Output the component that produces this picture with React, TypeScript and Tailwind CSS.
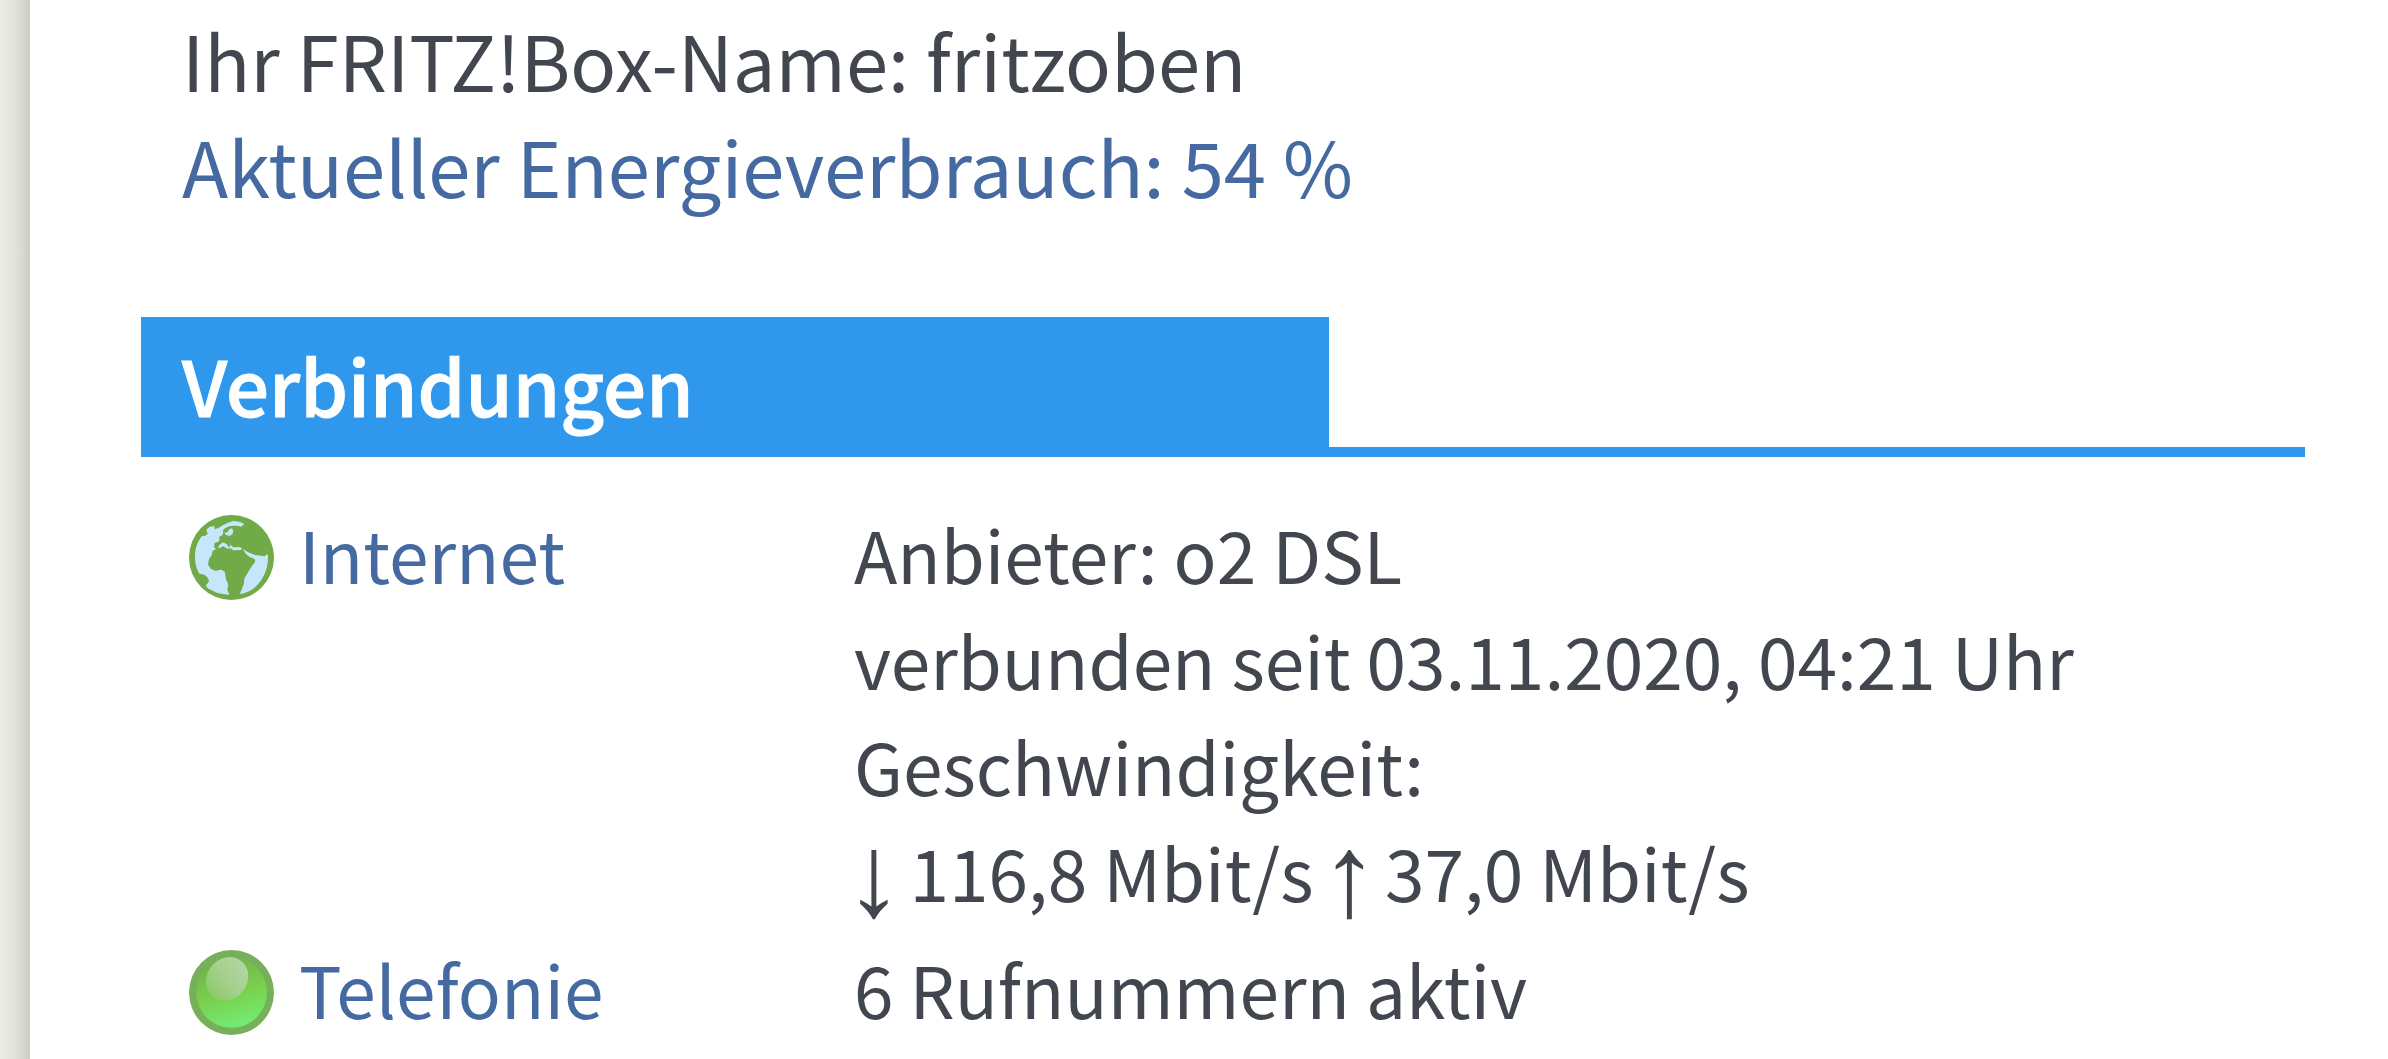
import type { ReactNode } from 'react';

function GlobeIcon() {
  return (
    <svg viewBox="57 60 255 255" className="mr-[25px] mt-[15px] size-[85px] shrink-0" aria-hidden="true">
      <circle cx="184.5" cy="187.5" r="127.5" fill="#70ab47" />
      <g fill="#c5e6fb">
        <path d="M223 86 208 80 190 78 174 83 158 91 146 98 135 103 132 93 118 96 109 104 113 117 104 123 95 124C81 142 75 162 75 188C75 206 80 222 88 236L103 239 112 247 117 257 113 265 108 270 110 277C128 291 152 299 178 299L172 284 175 269 168 252 164 230 154 224 136 227 124 223 114 209 117 193 125 180 128 167 138 162 132 157 134 143 145 141 149 133 147 126 157 121 160 113 159 106 166 99 178 94 190 92 202 92 214 95Z" />
        <path d="M178 103 186 100 190 108 187 118 178 123 167 119 163 113 172 112Z" />
        <path d="M143 160 149 149 159 142 170 147 177 158 181 149 190 157 207 156 216 160 213 165 190 166 181 160 172 161 160 154 150 158Z" />
        <path d="M218 162 235 172 255 180 284 184 291 177 294 182C295 218 282 253 256 276C243 288 227 296 209 297L215 284 222 265 223 251 238 225 256 199 253 191 240 187 228 177Z" />
      </g>
    </svg>
  );
}

function StatusLight() {
  return (
    <svg viewBox="57 60 255 255" className="mr-[25px] mt-[15px] size-[85px] shrink-0" aria-hidden="true">
      <defs>
        <linearGradient id="bulb" x1="0.35" y1="0" x2="0.65" y2="1">
          <stop offset="0" stopColor="#72ad50" />
          <stop offset="0.5" stopColor="#79d04c" />
          <stop offset="1" stopColor="#72ee76" />
        </linearGradient>
        <linearGradient id="gloss" x1="0.6" y1="0" x2="0.4" y2="1">
          <stop offset="0" stopColor="#b3d5a3" />
          <stop offset="0.5" stopColor="#a5d18e" />
          <stop offset="1" stopColor="#8ccb69" />
        </linearGradient>
      </defs>
      <circle cx="184.5" cy="187.5" r="127.5" fill="#76b05a" />
      <circle cx="184.5" cy="187.5" r="106" fill="url(#bulb)" />
      <ellipse cx="171.5" cy="146" rx="60" ry="68" transform="rotate(40 171.5 146)" fill="url(#gloss)" />
    </svg>
  );
}

function Arrow({ children }: { children: ReactNode }) {
  return (
    <span className="inline-flex w-[39.6px] justify-center align-[-13.5px] font-['Liberation_Serif',serif] text-[117px] leading-[0px]">
      {children}
    </span>
  );
}

export default function App() {
  return (
    <div className="flex h-[1059px] overflow-hidden bg-white font-['Noto_Sans_CJK_SC',sans-serif] text-[#42464e]">
      <div className="w-[30px] shrink-0 bg-linear-to-r from-[#ebece3] via-[#e2e3d9] to-[#cdcec5]" />
      <main className="ml-[111px] w-[2164px] whitespace-nowrap">
        <div className="pl-[41px] pt-[6px] text-[75.95px] leading-[106px]">
          <p>Ihr FRITZ!Box-Name: fritzoben</p>
          <p className="text-[#446aa1]">Aktueller Energieverbrauch: 54 %</p>
        </div>
        <div className="mt-[99px] border-b-[10px] border-[#2f98ed]">
          <h2 className="h-[130px] w-[1188px] bg-[#2f98ed] pl-[41px] text-[76px] font-medium leading-[135px] tracking-[0.1px] text-white [-webkit-text-stroke:1px_white]">
            Verbindungen
          </h2>
        </div>
        <div className="text-[71.2px] leading-[106px]">
          <section className="flex pl-[48px] pt-[43px]">
            <div className="flex w-[665px]">
              <GlobeIcon />
              <a className="text-[#446aa1]">Internet</a>
            </div>
            <div>
              <p>Anbieter: o2 DSL</p>
              <p>verbunden seit 03.11.2020, 04:21 Uhr</p>
              <p>Geschwindigkeit:</p>
              <p>
                <Arrow>↓</Arrow> 116,8 Mbit/s <Arrow>↑</Arrow> 37,0 Mbit/s
              </p>
            </div>
          </section>
          <section className="flex pl-[48px] pt-[11px]">
            <div className="flex w-[665px]">
              <StatusLight />
              <a className="text-[#446aa1]">Telefonie</a>
            </div>
            <p>6 Rufnummern aktiv</p>
          </section>
        </div>
      </main>
    </div>
  );
}
